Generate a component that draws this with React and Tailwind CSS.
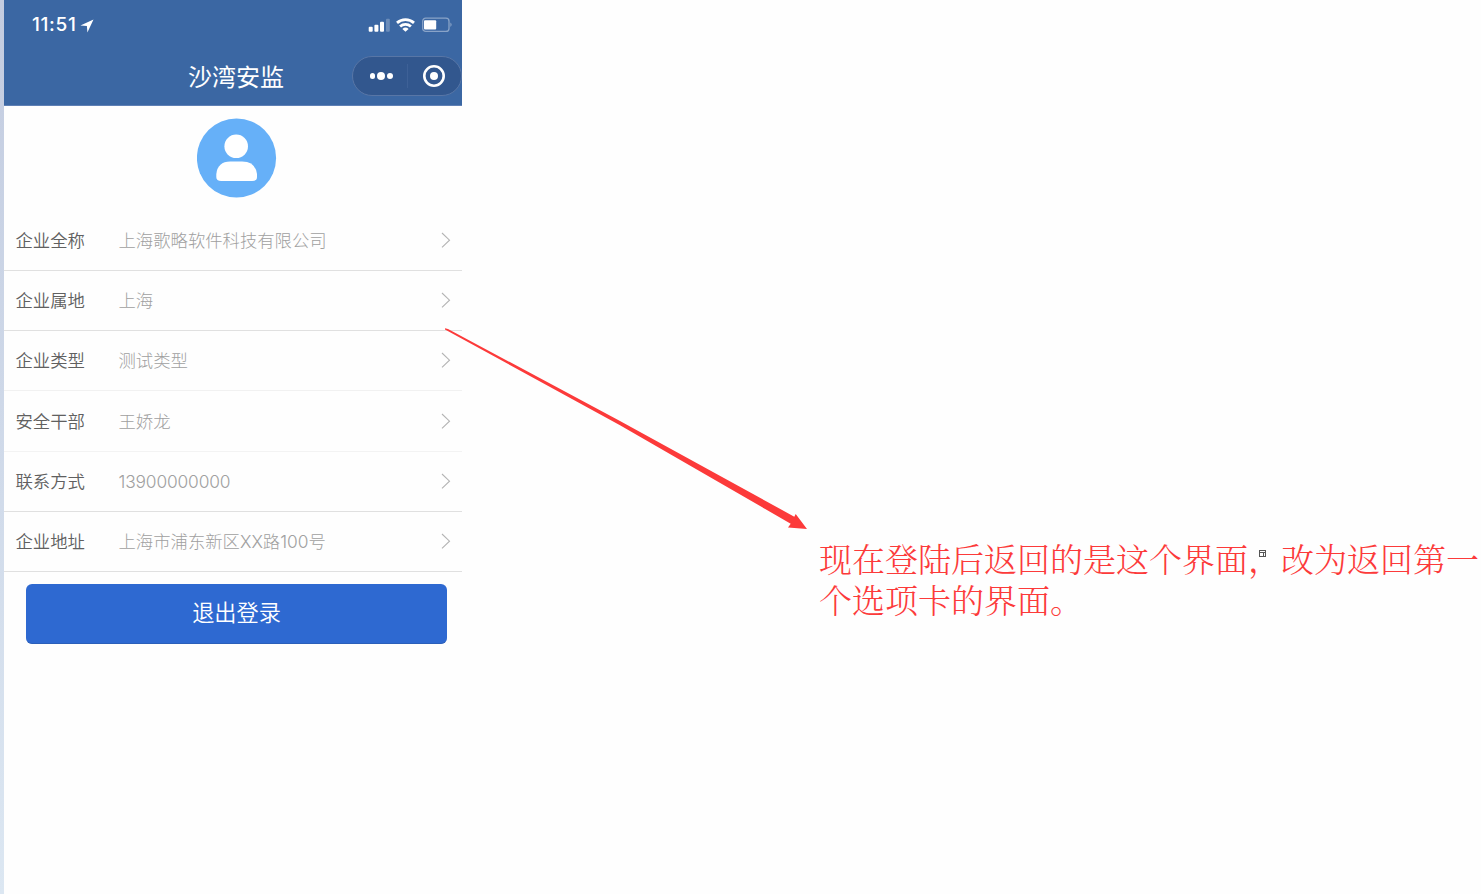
const rows = [
  { label: "企业全称", value: "上海歌略软件科技有限公司", cls: "h-[60px] border-[#e0e0e0]" },
  { label: "企业属地", value: "上海", cls: "h-[60px] border-[#e0e0e0]" },
  { label: "企业类型", value: "测试类型", cls: "h-[60px] border-[#f1f1f1]" },
  { label: "安全干部", value: "王娇龙", cls: "h-[61px] border-[#f3f3f3]" },
  { label: "联系方式", value: "13900000000", cls: "h-[60px] border-[#e0e0e0]", latin: true },
  { label: "企业地址", value: "上海市浦东新区XX路100号", cls: "h-[60px] border-[#e0e0e0]" },
];

function StatusBar() {
  return (
    <div className="flex h-[50px] items-center justify-between pl-7 pr-[9px]">
      <div className="flex items-center gap-[3px]">
        <span className="font-['Inter',sans-serif] w-[45px] text-[19px] font-medium leading-6 tracking-[0.65px]">11:51</span>
        <svg width="14" height="14" viewBox="0 0 14 14" className="mt-0.5" fill="white">
          <path d="M13.5 .5 7.4 13.5 6.9 7 .4 6.5Z" />
        </svg>
      </div>
      <div className="flex items-center">
        <svg width="22" height="14" viewBox="0 0 22 14" fill="white">
          <rect x="0.7" y="8.7" width="4" height="5" rx="1" />
          <rect x="6.4" y="6.7" width="4" height="7" rx="1" />
          <rect x="12" y="3.7" width="4" height="10" rx="1" />
          <rect x="18" y="0.7" width="3.8" height="13" rx="1" opacity=".25" />
        </svg>
        <svg width="20" height="14" viewBox="0 0 20 14" className="ml-1.5" fill="none" stroke="white" strokeWidth="2.8">
          <path d="M1 4.9a12.6 12.6 0 0 1 17 0M4.1 8.5a8 8 0 0 1 10.8 0" />
          <path d="M6.4 10.9a4.6 4.6 0 0 1 6.2 0L9.5 13.8Z" fill="white" stroke="none" />
        </svg>
        <svg width="31" height="16" viewBox="0 0 31 16" className="ml-1.5">
          <rect x="0.7" y="1.2" width="26.3" height="13.2" rx="3" fill="none" stroke="white" strokeOpacity=".4" strokeWidth="1.3" />
          <rect x="2" y="3.2" width="12.2" height="9.2" rx="1" fill="white" />
          <path d="M28.5 5.5q2 2.2 0 4.4Z" fill="white" opacity=".5" />
        </svg>
      </div>
    </div>
  );
}

function TitleBar() {
  return (
    <div className="grid h-[55px] grid-cols-[1fr_110px] items-center pb-[3px]">
      <h1 className="pl-[184px] text-[24px] font-normal leading-8">沙湾安监</h1>
      <div className="flex h-10 w-[109.5px] items-center justify-self-start rounded-full border border-[#5876a6] bg-[#32578e]">
        <div className="flex h-6 flex-1 items-center justify-center gap-[2px] border-r border-[#3e6197] pl-0.5">
          <i className="size-[5.5px] rounded-full bg-white" />
          <i className="size-2 rounded-full bg-white" />
          <i className="size-[5.5px] rounded-full bg-white" />
        </div>
        <div className="flex flex-1 justify-center">
          <svg width="24" height="24" viewBox="0 0 24 24">
            <circle cx="12" cy="12" r="9.7" fill="none" stroke="white" strokeWidth="2.6" />
            <circle cx="12" cy="12" r="4" fill="white" />
          </svg>
        </div>
      </div>
    </div>
  );
}

function Phone() {
  return (
    <section className="flex w-[458px] flex-col bg-[#fefefe]">
      <header className="h-[106px] border-b border-[#5f80b5] bg-[#3b67a3] text-white">
        <StatusBar />
        <TitleBar />
      </header>
      <div className="flex h-[105px] justify-center pl-[8px] pt-3">
        <svg width="80" height="80" viewBox="0 0 80 80">
          <circle cx="39.5" cy="40" r="39.6" fill="#66b0f8" />
          <circle cx="39.2" cy="28.3" r="11.8" fill="white" />
          <path d="M19.3 59V56Q20.7 43.5 33.2 43.5H45.2Q58.2 43.5 60 56V59Q60 63 55.2 63H24.2Q19.3 63 19.3 59Z" fill="white" />
        </svg>
      </div>
      <div>
        {rows.map((row) => (
          <div key={row.label} className={`flex items-center border-b pl-[11.5px] pr-[11px] text-[17.35px] ${row.cls}`}>
            <span className="w-[103px] font-[350] text-[#606060]">{row.label}</span>
            <span className={`flex-1 pt-0.5 font-light text-[#a0a0a0] ${row.latin ? "font-['Inter',sans-serif] tracking-[-0.15px]" : "font-['Inter','Noto_Sans_CJK_SC',sans-serif]"}`}>{row.value}</span>
            <svg width="10" height="16" viewBox="0 0 10 16" className="mb-px" fill="none" stroke="#b4b4b4" strokeWidth="1.1">
              <path d="M1 1 8.5 8.2 1 15.4" />
            </svg>
          </div>
        ))}
      </div>
      <button className="ml-[22px] mt-3 h-[60px] w-[421px] rounded-[6px] border-b border-[#2b5fb9] bg-[#2e69d1] pb-1 text-[22.2px] font-[350] text-white">
        退出登录
      </button>
    </section>
  );
}

export default function App() {
  return (
    <main className="relative flex h-[894px] w-[1481px] overflow-hidden bg-[#fefefe] font-['Noto_Sans_CJK_SC',sans-serif]">
      <div className="w-1 bg-linear-to-b from-[#c3cce0] to-[#dce7f2]" />
      <Phone />
      <p className="ml-[357px] mt-[537px] whitespace-nowrap font-['Noto_Serif_CJK_SC','Noto_Sans_CJK_SC',serif] text-[33px] font-light leading-[41px] text-[#fc3a3a]">
        现在登陆后返回的是这个界面，改为返回第一
        <br />
        个选项卡的界面。
      </p>
      <svg className="absolute left-[440px] top-[320px]" width="380" height="215" viewBox="440 320 380 215">
        <path d="M445 328.2 448 329 620 421 794.3 516.7 795.7 514 807 529 788 527.4 790.7 523.7 620 425.3 445 329.4Z" fill="#fc3a3a" />
      </svg>
      <svg className="absolute left-[1259px] top-[550px]" width="7" height="7" viewBox="0 0 7 7" fill="none" stroke="#555" shapeRendering="crispEdges">
        <path d="M.5 .5H6.5V6.5H.5ZM1 2.5H6M4.5 2V6M2.5 4.5H3" />
      </svg>
    </main>
  );
}
